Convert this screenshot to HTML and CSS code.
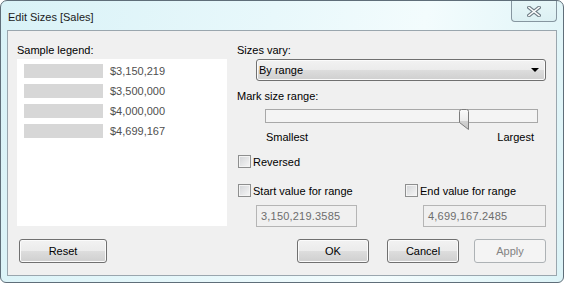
FILE: index.html
```html
<!DOCTYPE html>
<html lang="en">
<head>
    <meta charset="UTF-8">
    <title>Edit Sizes [Sales]</title>
    <link rel="stylesheet" href="styles.css">
</head>
<body>
    <div class="window">
        <div class="titlebar">
            <span class="title">Edit Sizes [Sales]</span>
            <div class="close-btn">
                <svg width="14" height="11" viewBox="0 0 14 11">
                    <path d="M2 1.5 L12 9.5 M12 1.5 L2 9.5" stroke="#6f7d86" stroke-width="3.6" stroke-linecap="square"/>
                    <path d="M2 1.5 L12 9.5 M12 1.5 L2 9.5" stroke="#fff" stroke-width="1.6" stroke-linecap="square"/>
                </svg>
            </div>
        </div>
        <div class="client">
            <div class="panels">
                <div class="legend-col">
                    <div class="label">Sample legend:</div>
                    <div class="legend-box">
                        <div class="legend-row"><span class="legend-bar"></span><span class="legend-val">$3,150,219</span></div>
                        <div class="legend-row"><span class="legend-bar"></span><span class="legend-val">$3,500,000</span></div>
                        <div class="legend-row"><span class="legend-bar"></span><span class="legend-val">$4,000,000</span></div>
                        <div class="legend-row"><span class="legend-bar"></span><span class="legend-val">$4,699,167</span></div>
                    </div>
                </div>
                <div class="settings">
                    <div class="label">Sizes vary:</div>
                    <div class="select">
                        <span>By range</span>
                        <span class="select-arrow"></span>
                    </div>
                    <div class="label label-gap">Mark size range:</div>
                    <div class="slider">
                        <div class="slider-track"></div>
                        <svg class="slider-thumb" width="10" height="21" viewBox="0 0 10 21">
                            <defs>
                                <linearGradient id="thumbFill" x1="0" y1="0" x2="0" y2="1">
                                    <stop offset="0" stop-color="#fafafa"/>
                                    <stop offset="0.55" stop-color="#ececec"/>
                                    <stop offset="0.56" stop-color="#d2d2d2"/>
                                    <stop offset="1" stop-color="#c6c6c6"/>
                                </linearGradient>
                            </defs>
                            <path d="M0.5 2.5 Q0.5 0.5 2.5 0.5 H7.5 Q9.5 0.5 9.5 2.5 V20.5 L0.5 13.5 Z" fill="url(#thumbFill)" stroke="#7c7c7c"/>
                        </svg>
                    </div>
                    <div class="slider-labels">
                        <span>Smallest</span>
                        <span>Largest</span>
                    </div>
                    <div class="check-row reversed">
                        <span class="checkbox"></span>
                        <span>Reversed</span>
                    </div>
                    <div class="range-row">
                        <div class="range-col start-col">
                            <div class="check-row">
                                <span class="checkbox"></span>
                                <span>Start value for range</span>
                            </div>
                            <div class="value-box">3,150,219.3585</div>
                        </div>
                        <div class="range-col end-col">
                            <div class="check-row">
                                <span class="checkbox"></span>
                                <span>End value for range</span>
                            </div>
                            <div class="value-box">4,699,167.2485</div>
                        </div>
                    </div>
                </div>
            </div>
            <div class="buttons">
                <div class="btn btn-reset">Reset</div>
                <div class="btn btn-ok">OK</div>
                <div class="btn btn-cancel">Cancel</div>
                <div class="btn btn-apply disabled">Apply</div>
            </div>
        </div>
    </div>
</body>
</html>
```

FILE: styles.css
```css
body{
    margin:0;
    background:#fff;
    font-family:"Liberation Sans", Arial, sans-serif;
    font-size:11px;
    color:#000;
}
.window{
    width:564px;
    height:283px;
    box-sizing:border-box;
    border:1px solid #5f6e79;
    border-radius:7px 7px 6px 6px;
    background:linear-gradient(100deg,#d9f2f7 0%,#e8f8fb 45%,#f3fcfd 70%,#dcf3f7 100%);
    padding:0 6px 6px;
    display:flex;
    flex-direction:column;
}
.titlebar{
    height:29px;
    display:flex;
    align-items:flex-start;
}
.title{
    margin-top:8px;
    padding-left:1px;
    line-height:16px;
    color:#1a1a1a;
}
.close-btn{
    margin-left:auto;
    width:44px;
    height:20px;
    border:1px solid #8696a0;
    border-top:none;
    border-radius:0 0 4px 4px;
    background:linear-gradient(#e6f6f8,#dcf0f3);
    display:flex;
    align-items:center;
    justify-content:center;
}
.client{
    flex:1;
    background:#f0f0f0;
    border:1px solid #9aa6ae;
}
.panels{
    display:flex;
    padding:11px 0 0 9px;
    height:185px;
}
.legend-col{
    width:210px;
}
.label{
    height:17px;
    line-height:17px;
}
.legend-box{
    height:167px;
    box-sizing:border-box;
    background:#fff;
    padding:5px 7px;
}
.legend-row{
    display:flex;
    align-items:center;
    height:14px;
    margin-bottom:6px;
}
.legend-bar{
    width:79px;
    height:14px;
    background:#d7d7d7;
}
.legend-val{
    margin-left:7px;
    color:#4f4f4f;
    line-height:14px;
}
.settings{
    margin-left:10px;
    width:309px;
}
.select{
    margin-left:19px;
    width:290px;
    height:22px;
    box-sizing:border-box;
    border:1px solid #707070;
    border-radius:3px;
    background:linear-gradient(#f2f2f2 0%,#ebebeb 50%,#dddddd 51%,#cfcfcf 100%);
    box-shadow:inset 0 0 0 1px #fbfbfb;
    display:flex;
    align-items:center;
    justify-content:space-between;
    padding:0 6px 0 2px;
}
.select-arrow{
    width:0;
    height:0;
    border-left:4px solid transparent;
    border-right:4px solid transparent;
    border-top:4px solid #000;
}
.label-gap{
    margin-top:7px;
}
.slider{
    position:relative;
    margin:2px 0 0 28px;
    width:273px;
    height:20px;
}
.slider-track{
    margin-top:4px;
    height:14px;
    box-sizing:border-box;
    border:1px solid #a8a8a8;
    background:#f4f4f4;
}
.slider-thumb{
    position:absolute;
    left:194px;
    top:0;
}
.slider-labels{
    display:flex;
    justify-content:space-between;
    margin:0 0 0 29px;
    width:268px;
    height:17px;
    line-height:17px;
}
.check-row{
    display:flex;
    align-items:center;
    height:17px;
    margin-left:1px;
}
.checkbox{
    width:13px;
    height:13px;
    box-sizing:border-box;
    border:1px solid #8e8f8f;
    background:linear-gradient(135deg,#d2d4d7,#f7f7f7);
    box-shadow:inset 0 0 0 1px #f4f4f4;
    margin-right:2px;
}
.reversed{
    margin-top:7px;
}
.range-row{
    display:flex;
    margin-top:12px;
}
.start-col{
    width:167px;
}
.end-col{
    width:142px;
}
.value-box{
    margin:6px 0 0 19px;
    height:22px;
    box-sizing:border-box;
    border:1px solid #b5b5b5;
    background:#f0f0f0;
    color:#6d6d6d;
    line-height:20px;
    padding-left:4px;
    letter-spacing:0.2px;
}
.start-col .value-box{
    width:101px;
}
.end-col .value-box{
    width:123px;
}
.buttons{
    display:flex;
    margin-top:12px;
    padding:0 10px 0 11px;
}
.btn{
    width:72px;
    height:24px;
    box-sizing:border-box;
    border:1px solid #707070;
    border-radius:3px;
    background:linear-gradient(#f2f2f2 0%,#ebebeb 50%,#dddddd 51%,#cfcfcf 100%);
    box-shadow:inset 0 0 0 1px #fbfbfb;
    text-align:center;
    line-height:22px;
}
.btn-reset{
    width:88px;
}
.btn-ok{
    margin-left:auto;
}
.btn-cancel{
    margin-left:18px;
}
.btn-apply{
    margin-left:15px;
}
.disabled{
    border-color:#adb2b5;
    background:#f4f4f4;
    box-shadow:none;
    color:#838383;
}
```
